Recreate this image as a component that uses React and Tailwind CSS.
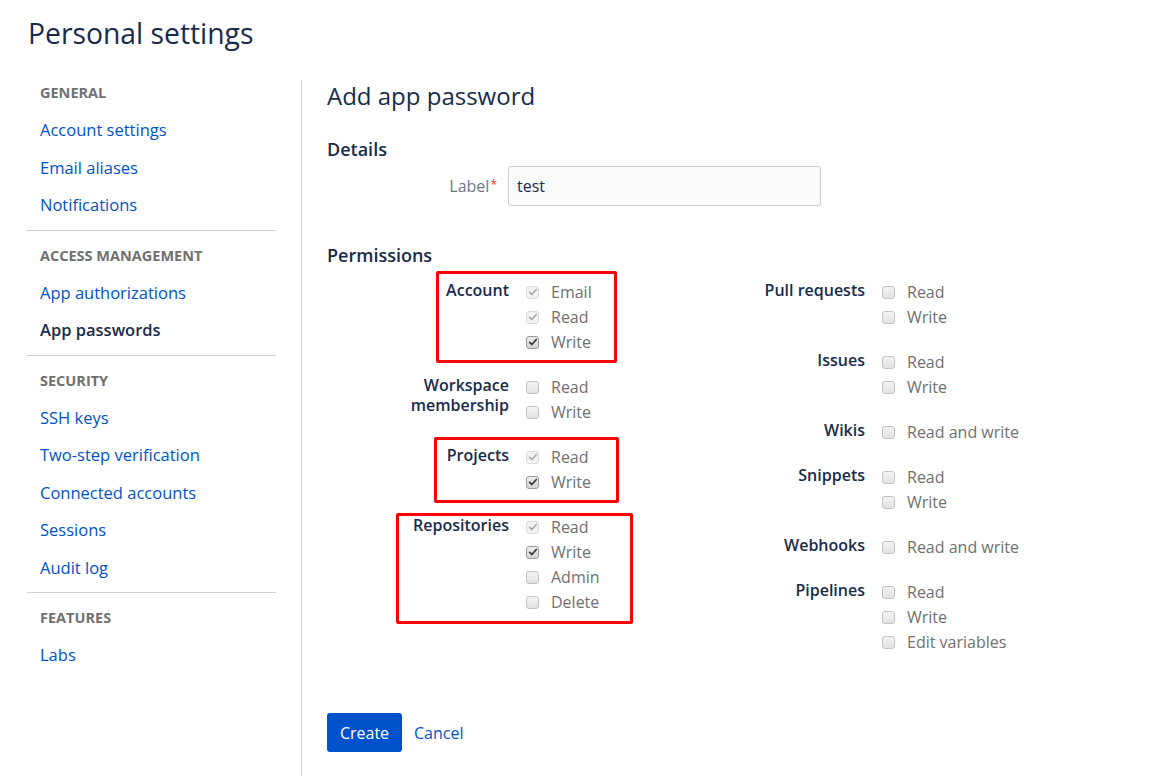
import React from "react";

const sections = [
  {
    title: "GENERAL",
    items: [{ label: "Account settings" }, { label: "Email aliases" }, { label: "Notifications" }],
  },
  {
    title: "ACCESS MANAGEMENT",
    items: [{ label: "App authorizations" }, { label: "App passwords", active: true }],
  },
  {
    title: "SECURITY",
    items: [
      { label: "SSH keys" },
      { label: "Two-step verification" },
      { label: "Connected accounts" },
      { label: "Sessions" },
      { label: "Audit log" },
    ],
  },
  {
    title: "FEATURES",
    items: [{ label: "Labs" }],
  },
];

// state: "off" | "on" | "locked" (checked + disabled)
const leftGroups = [
  {
    label: ["Account"],
    options: [
      ["Email", "locked"],
      ["Read", "locked"],
      ["Write", "on"],
    ],
  },
  {
    label: ["Workspace", "membership"],
    options: [
      ["Read", "off"],
      ["Write", "off"],
    ],
  },
  {
    label: ["Projects"],
    options: [
      ["Read", "locked"],
      ["Write", "on"],
    ],
  },
  {
    label: ["Repositories"],
    options: [
      ["Read", "locked"],
      ["Write", "on"],
      ["Admin", "off"],
      ["Delete", "off"],
    ],
  },
];

const rightGroups = [
  { label: ["Pull requests"], options: [["Read", "off"], ["Write", "off"]] },
  { label: ["Issues"], options: [["Read", "off"], ["Write", "off"]] },
  { label: ["Wikis"], options: [["Read and write", "off"]] },
  { label: ["Snippets"], options: [["Read", "off"], ["Write", "off"]] },
  { label: ["Webhooks"], options: [["Read and write", "off"]] },
  {
    label: ["Pipelines"],
    options: [
      ["Read", "off"],
      ["Write", "off"],
      ["Edit variables", "off"],
    ],
  },
];

function Checkbox({ state }) {
  if (state === "off") {
    return (
      <span className="block h-[13px] w-[13px] shrink-0 rounded-[3px] border border-[#c2c2c2] bg-gradient-to-b from-[#f4f4f4] to-[#e2e2e2]" />
    );
  }
  const locked = state === "locked";
  return (
    <span
      className={
        locked
          ? "flex h-[13px] w-[13px] shrink-0 items-center justify-center rounded-[3px] border border-[#dcdcdc] bg-[#f2f2f2]"
          : "flex h-[13px] w-[13px] shrink-0 items-center justify-center rounded-[3px] border border-[#9a9a9a] bg-gradient-to-b from-[#eeeeee] to-[#d4d4d4]"
      }
    >
      <svg viewBox="0 0 12 12" className="h-[10px] w-[10px]">
        <path
          d="M2 6.4 L4.6 9 L10 3"
          fill="none"
          stroke={locked ? "#a8a8a8" : "#333333"}
          strokeWidth="2"
          strokeLinecap="round"
          strokeLinejoin="round"
        />
      </svg>
    </span>
  );
}

function Group({ group }) {
  return (
    <div className="mb-[20px] flex">
      <div className="w-[182px] shrink-0 text-right text-[16px] font-semibold leading-[20px] text-[#172b4d]">
        {group.label.map((l) => (
          <div key={l}>{l}</div>
        ))}
      </div>
      <div className="ml-[17px] flex flex-col">
        {group.options.map(([name, state]) => (
          <label key={name} className="flex h-[25px] items-center gap-[12px] text-[16px] text-[#707070]">
            <Checkbox state={state} />
            <span className="leading-[25px]">{name}</span>
          </label>
        ))}
      </div>
    </div>
  );
}

export default function App() {
  return (
    <div
      className="relative min-h-[776px] bg-white text-[#172b4d]"
      style={{ fontFamily: '"Open Sans", "Noto Sans", sans-serif' }}
    >
      <h1 className="pl-[28px] pt-[13px] text-[28.3px] font-normal leading-[40px] text-[#172b4d]">
        Personal settings
      </h1>

      <div className="mt-[27px] flex">
        <nav className="ml-[27px] w-[249px] shrink-0">
          {sections.map((s, i) => (
            <div key={s.title} className={i > 0 ? "border-t border-[#d0d0d0] pt-[12px]" : ""}>
              <div className="pb-[6px] pl-[13px] text-[14.5px] font-bold leading-[25px] text-[#707070]">
                {s.title}
              </div>
              <ul className="pb-[6px]">
                {s.items.map((it) => (
                  <li
                    key={it.label}
                    className={
                      it.active
                        ? "pl-[13px] text-[16.5px] font-semibold leading-[37.5px] text-[#172b4d]"
                        : "pl-[13px] text-[16.5px] leading-[37.5px] text-[#0052cc]"
                    }
                  >
                    {it.label}
                  </li>
                ))}
              </ul>
            </div>
          ))}
        </nav>

        <div className="ml-[25px] min-h-[696px] border-l border-[#d0d0d0] pl-[25px]">
          <h2 className="text-[24px] font-normal leading-[32px] text-[#172b4d]">Add app password</h2>

          <h3 className="mt-[25px] text-[18px] font-semibold leading-[24px] text-[#172b4d]">Details</h3>
          <div className="mt-[5px] flex items-center">
            <div className="w-[181px] pr-[11px] text-right text-[16px] text-[#6b778c]">
              Label
              <sup className="relative -top-[3px] ml-[1px] text-[12px] text-[#de350b]">*</sup>
            </div>
            <div className="flex h-[40px] w-[313px] items-center rounded-[3px] border border-[#cccccc] bg-[#fafbfc] pl-[8px] text-[16px] text-[#172b4d]">
              test
            </div>
          </div>

          <h3 className="mt-[37px] text-[18px] font-semibold leading-[24px] text-[#172b4d]">Permissions</h3>
          <div className="mt-[12.5px] flex">
            <div className="w-[356px] shrink-0">
              {leftGroups.map((g) => (
                <Group key={g.label.join(" ")} group={g} />
              ))}
            </div>
            <div className="w-[356px] shrink-0">
              {rightGroups.map((g) => (
                <Group key={g.label.join(" ")} group={g} />
              ))}
            </div>
          </div>

          <div className="mt-[38.5px] flex items-center gap-[12px]">
            <button className="h-[39px] w-[75px] rounded-[3px] bg-[#0052cc] text-[16px] text-white">Create</button>
            <button className="text-[16px] text-[#0052cc]">Cancel</button>
          </div>
        </div>
      </div>

      {/* red annotation frames */}
      <div className="pointer-events-none absolute left-[436px] top-[271px] h-[92px] w-[181px] rounded-[2px] border-[3px] border-[#ff0000]" />
      <div className="pointer-events-none absolute left-[434px] top-[437px] h-[66px] w-[185px] rounded-[2px] border-[3px] border-[#ff0000]" />
      <div className="pointer-events-none absolute left-[396px] top-[513px] h-[111px] w-[237px] rounded-[2px] border-[3px] border-[#ff0000]" />
    </div>
  );
}
